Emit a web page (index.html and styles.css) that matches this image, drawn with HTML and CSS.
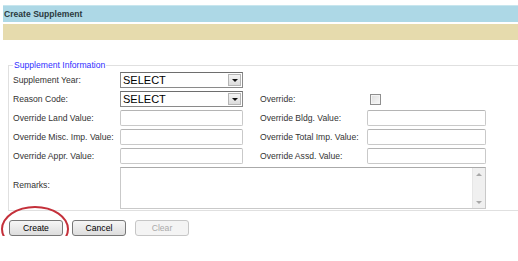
FILE: index.html
```html
<!DOCTYPE html>
<html lang="en">
<head>
    <meta charset="UTF-8">
    <title>Create Supplement</title>
    <link rel="stylesheet" href="styles.css">
</head>
<body>
    <div class="page">
        <div class="title-bar">Create Supplement</div>
        <div class="sub-bar"></div>

        <fieldset class="supplement-info">
            <legend>Supplement Information</legend>
            <div class="form-grid">
                <label class="lbl">Supplement Year:</label>
                <div class="select"><span class="select-text">SELECT</span><span class="select-arrow"></span></div>
                <span></span>
                <span></span>

                <label class="lbl">Reason Code:</label>
                <div class="select"><span class="select-text">SELECT</span><span class="select-arrow"></span></div>
                <label class="lbl right">Override:</label>
                <div class="check-cell"><span class="checkbox"></span></div>

                <label class="lbl">Override Land Value:</label>
                <div class="input"></div>
                <label class="lbl right">Override Bldg. Value:</label>
                <div class="input"></div>

                <label class="lbl">Override Misc. Imp. Value:</label>
                <div class="input"></div>
                <label class="lbl right">Override Total Imp. Value:</label>
                <div class="input"></div>

                <label class="lbl">Override Appr. Value:</label>
                <div class="input"></div>
                <label class="lbl right">Override Assd. Value:</label>
                <div class="input"></div>

                <label class="lbl remarks-lbl">Remarks:</label>
                <div class="textarea">
                    <div class="scrollbar">
                        <span class="arrow-up"></span>
                        <span class="arrow-down"></span>
                    </div>
                </div>
            </div>
        </fieldset>

        <div class="actions">
            <button class="btn">Create</button>
            <button class="btn">Cancel</button>
            <button class="btn" disabled>Clear</button>
            <div class="highlight"></div>
        </div>
    </div>
</body>
</html>
```

FILE: styles.css
```css
body {
    margin: 0;
    font-family: "Liberation Sans", Arial, sans-serif;
    font-size: 8.6px;
    color: #333;
    background: #fff;
    overflow: hidden;
}

.page {
    padding: 6px 0 0 3px;
}

.title-bar {
    height: 16px;
    line-height: 16px;
    padding-left: 1px;
    background-color: #add8e6;
    border-top: 1px solid #c8e6ee;
    margin-top: -1px;
    font-weight: bold;
    color: #2b3a40;
}

.sub-bar {
    height: 16px;
    margin-top: 2px;
    background-color: #e6dbad;
}

.supplement-info {
    margin: 20px -10px 0 5px;
    padding: 2px 0 8px 4px;
    border: 1px solid #e0e0e0;
    border-right: none;
}

.supplement-info legend {
    padding: 0 1px;
    color: #2f2fff;
    font-size: 8.6px;
}

.form-grid {
    display: grid;
    grid-template-columns: 107px 123px 124px 119px;
    grid-auto-rows: 16px;
    row-gap: 3px;
    align-items: center;
}

.lbl {
    white-space: nowrap;
}

.lbl.right {
    padding-left: 17px;
}

.select {
    height: 16px;
    box-sizing: border-box;
    border: 1px solid #8a8a8a;
    border-top-color: #6e6e6e;
    display: flex;
    align-items: center;
    justify-content: space-between;
    background: #fff;
}

.select-text {
    font-size: 11px;
    color: #000;
    padding-left: 2px;
}

.select-arrow {
    width: 13px;
    height: 12px;
    margin-right: 1px;
    box-sizing: border-box;
    border: 1px solid #b5b5b5;
    background: linear-gradient(#f4f4f4, #dcdcdc);
    position: relative;
}

.select-arrow::after {
    content: "";
    position: absolute;
    left: 3px;
    top: 4px;
    border-left: 3px solid transparent;
    border-right: 3px solid transparent;
    border-top: 3px solid #111;
}

.input {
    height: 16px;
    box-sizing: border-box;
    border: 1px solid #c9c9c9;
    border-top-color: #b4b4b4;
    border-radius: 2px;
    background: #fff;
}

.check-cell {
    padding-left: 3px;
}

.checkbox {
    display: block;
    width: 11px;
    height: 11px;
    box-sizing: border-box;
    border: 1px solid #8f8f8f;
    background: linear-gradient(135deg, #dedede, #f8f8f8);
    box-shadow: inset 0 0 0 1px #f4f4f4;
}

.remarks-lbl {
    grid-row: span 2;
    align-self: center;
}

.textarea {
    grid-column: 2 / span 3;
    grid-row: span 2;
    height: 42px;
    align-self: start;
    box-sizing: border-box;
    border: 1px solid #c9c9c9;
    border-top-color: #aaa;
    background: #fff;
    display: flex;
    justify-content: flex-end;
}

.scrollbar {
    width: 12px;
    background: #f0f0f0;
    border-left: 1px solid #e6e6e6;
    display: flex;
    flex-direction: column;
    justify-content: space-between;
    align-items: center;
    padding: 5px 0 4px;
}

.arrow-up {
    border-left: 3px solid transparent;
    border-right: 3px solid transparent;
    border-bottom: 3px solid #a8a8a8;
}

.arrow-down {
    border-left: 3px solid transparent;
    border-right: 3px solid transparent;
    border-top: 3px solid #a8a8a8;
}

.actions {
    position: relative;
    display: flex;
    gap: 9px;
    margin: 9px 0 0 6px;
}

.btn {
    width: 54px;
    height: 16px;
    padding: 0;
    font-family: "Liberation Sans", Arial, sans-serif;
    font-size: 8.6px;
    color: #000;
    border: 1px solid #777;
    border-radius: 3px;
    background: linear-gradient(#f6f6f6, #dddddd);
}

.btn:disabled {
    color: #aaa;
    border-color: #c6c6c6;
    background: #f4f4f4;
}

.highlight {
    position: absolute;
    left: -8px;
    top: -14px;
    width: 68px;
    height: 46px;
    box-sizing: border-box;
    border: 2px solid #c4303a;
    border-radius: 50%;
}
```
